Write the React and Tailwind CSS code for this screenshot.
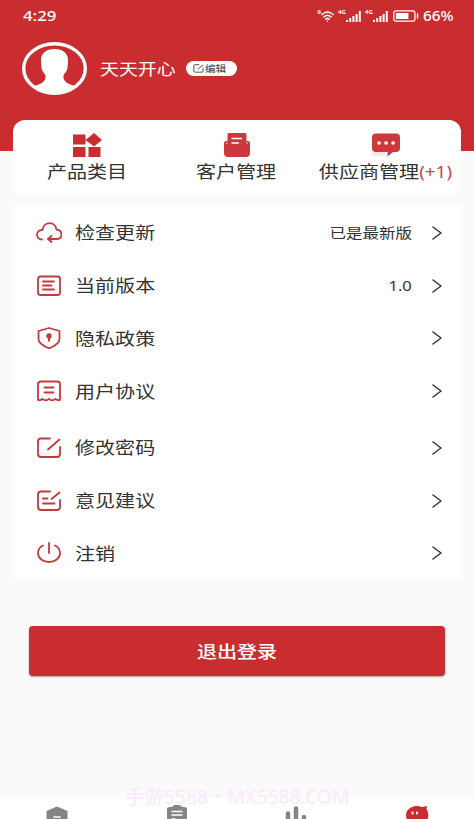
import React from 'react';

const RED = '#c03a3e';

function Svg({ className, viewBox, children }) {
  return (
    <svg className={className} viewBox={viewBox} preserveAspectRatio="none" fill="none" strokeLinecap="round" strokeLinejoin="round">
      {children}
    </svg>
  );
}

const glyphs = {
  cloud: (
    <>
      <path d="M6 17.5C3.5 17.500 1 15.800 1 12.500C1 9.700 3.500 7.800 6.500 8C7 4 10 1.200 13.500 1.200C17.500 1.200 20 4.200 20.500 7.700C24 8 25.500 9.900 25.500 12.600C25.500 15.600 23.500 17 20.500 17H12.500" />
      <path d="M15.500 13.800L12 17L15.500 20" />
    </>
  ),
  version: (
    <>
      <rect x="2" y="1.500" width="22" height="18.500" rx="2.500" />
      <path d="M7 6.500H18M7 10.500H15.500M7 14.500H18" />
    </>
  ),
  shield: (
    <>
      <path d="M13 1L23.500 4V12C23.500 16.500 19 19 13 21.300C7 19 2.500 16.500 2.500 12V4Z" />
      <circle cx="13" cy="9" r="1.800" fill={RED} />
      <path d="M13 10V13.700" strokeWidth="2" />
    </>
  ),
  receipt: (
    <>
      <path d="M2 20V4Q2 1.500 5 1.500H21Q24 1.500 24 4V20Q21.500 20.800 19.500 18.800Q16.200 21.800 13 18.800Q9.800 21.800 6.500 18.800Q4.500 20.800 2 20Z" />
      <path d="M8.500 7.500H17.500M8.500 12.500H17.500" />
    </>
  ),
  edit: (
    <>
      <path d="M14 1.500H5Q2 1.500 2 4.500V17Q2 20 5 20H21Q24 20 24 17V10" />
      <path d="M12 12.500L23.500 2.500" />
    </>
  ),
  feedback: (
    <>
      <path d="M14 1.500H5Q2 1.500 2 4.500V17Q2 20 5 20H21Q24 20 24 17V10" />
      <path d="M15.500 9L23.500 2.500M7 8.500H11.500M7 13.500H18.500" />
    </>
  ),
  power: <path d="M13 1V11M7 3.500C4 5 2 7.800 2 11C2 16.200 7 20 13 20S24 16.200 24 11C24 7.800 22 5 19 3.500" />,
};

const rows = [
  { icon: 'cloud', label: '检查更新', value: '已是最新版' },
  { icon: 'version', label: '当前版本', value: '1.0' },
  { icon: 'shield', label: '隐私政策' },
  { icon: 'receipt', label: '用户协议' },
  { icon: 'edit', label: '修改密码', gap: true },
  { icon: 'feedback', label: '意见建议' },
  { icon: 'power', label: '注销' },
];

function Row({ icon, label, value, gap }) {
  return (
    <li className={`flex h-[52.75px] items-center pl-[23px] pr-[19px] pt-px ${gap ? 'mt-1' : ''}`}>
      <Svg className="h-[22px] w-[26px] shrink-0 stroke-[#c03a3e] stroke-[1.8]" viewBox="0 0 26 22">
        {glyphs[icon]}
      </Svg>
      <span className="ml-[12.500px] mt-px origin-left scale-x-[1.18] whitespace-nowrap text-[17px] leading-6">{label}</span>
      <span className="ml-auto mr-5 mt-px origin-right scale-x-[1.18] whitespace-nowrap text-[14px] leading-5">{value}</span>
      <Svg className="h-3.5 w-2.5 shrink-0 stroke-[#333] stroke-[1.5]" viewBox="0 0 10 14">
        <path d="M1 1L9 7L1 13" />
      </Svg>
    </li>
  );
}

function Signal() {
  return (
    <div className="flex items-start">
      <span className="-mt-px w-2 text-[6px] font-bold leading-[7px]">4G</span>
      <Svg className="mt-px h-[11px] w-[15px] stroke-white stroke-[2]" viewBox="0 0 15 11">
        <path strokeLinecap="butt" d="M1 11V9M4.200 11V7M7.400 11V5M10.600 11V3M13.800 11V0" />
      </Svg>
    </div>
  );
}

function StatusBar() {
  return (
    <div className="flex h-8 items-center pl-[23px] pr-[21px] text-white">
      <span className="origin-left scale-x-[1.2] text-[14px] font-medium leading-5">4:29</span>
      <div className="ml-auto flex items-center">
        <div className="mr-1 flex items-start">
          <span className="-mt-px text-[6px] font-bold leading-[7px]">6</span>
          <Svg className="mt-px h-[11px] w-[13px] stroke-white stroke-[1.5]" viewBox="0 0 14 11">
            <path d="M1 3.500Q7 -1.500 13 3.500M3 6Q7 2.500 11 6M5 8.300Q7 6.500 9 8.300M7 10V10.200" />
          </Svg>
        </div>
        <Signal />
        <div className="w-1" />
        <Signal />
        <Svg className="ml-[5px] h-3 w-[26px]" viewBox="0 0 27 12">
          <rect x="0.800" y="0.800" width="22" height="10.400" rx="2.500" stroke="white" strokeWidth="1.300" />
          <rect x="3" y="3" width="13" height="6" rx="0.500" fill="white" />
          <path d="M25.500 4V8" stroke="white" strokeWidth="1.500" />
        </Svg>
        <span className="ml-1 w-[30px] origin-left scale-x-[1.14] whitespace-nowrap text-[13.500px] font-medium leading-5">66%</span>
      </div>
    </div>
  );
}

function Header() {
  return (
    <header className="h-[151px] bg-[#c92d2f] text-white">
      <StatusBar />
      <div className="flex items-center pl-[22px] pt-[10px]">
        <Svg className="h-[53px] w-[65px]" viewBox="0 0 65 53">
          <ellipse cx="32.500" cy="26.500" rx="30.800" ry="24.800" stroke="white" strokeWidth="3.400" />
          <path fill="white" d="M32.500 7C41 7 46.500 11.500 46 19L45.500 26C45 30 42 31 41.500 34C41 39 45 42 53 44Q43 52 32.500 52T12 44C20 42 24 39 23.500 34C23 31 20 30 19.500 26L19 19C18.500 11.500 24 7 32.500 7Z" />
        </Svg>
        <span className="ml-[13px] w-[76px] origin-left scale-x-[1.18] whitespace-nowrap text-[16px] leading-6">天天开心</span>
        <button className="ml-[10px] flex h-[15px] w-[51px] items-center rounded-full bg-white pl-[7px] text-[#333]">
          <Svg className="h-[9px] w-[11px] stroke-[#333] stroke-[2]" viewBox="0 0 26 22">
            {glyphs.edit}
          </Svg>
          <span className="ml-px origin-left scale-x-[1.18] whitespace-nowrap text-[9px] leading-3">编辑</span>
        </button>
      </div>
    </header>
  );
}

function Shortcut({ label, extra, children }) {
  return (
    <div className="flex flex-1 flex-col items-center pt-3">
      {children}
      <span className="mt-[2.500px] -ml-px scale-x-[1.18] whitespace-nowrap text-[17px] leading-6">
        {label}
        {extra && <span className="text-[16px] text-[#c5474c]">{extra}</span>}
      </span>
    </div>
  );
}

function Shortcuts() {
  return (
    <section className="flex h-[75px] rounded-xl bg-white">
      <Shortcut label="产品类目">
        <Svg className="-ml-px h-[25px] w-[30px] fill-[#c92d2f]" viewBox="0 0 30 25">
          <path d="M1 2.500H13.500V12.500H1ZM1 15H13.500V25H1ZM16.500 15H28.500V25H16.500ZM22 1L30 8L22 14.500L13.500 8Z" />
        </Svg>
      </Shortcut>
      <Shortcut label="客户管理">
        <Svg className="h-[25px] w-[28px]" viewBox="0 0 28 25">
          <path d="M6 1H22Q23.500 1 23.500 2.500V9H25Q27 9 27 11V21Q27 25 23 25H5Q1 25 1 21V11Q1 9 3 9H4.500V2.500Q4.500 1 6 1Z" fill="#cd383d" />
          <path d="M9 6.500H18.500M9 11H15.500" stroke="white" strokeWidth="1.300" />
          <path d="M3.500 11.500L4.500 10.500M24.500 11.500L23.500 10.500" stroke="white" />
        </Svg>
      </Shortcut>
      <Shortcut label="供应商管理" extra="(+1)">
        <Svg className="h-[25px] w-[30px]" viewBox="0 0 30 25">
          <path d="M1 19H15V24H3Q1 24 1 22Z" fill="#fae7e6" />
          <path d="M5 1.500H25Q29 1.500 29 5V16Q29 20 25 20H22L16.500 24.500V20H5Q1 20 1 16V5Q1 1.500 5 1.500Z" fill="#cd383d" />
          <path d="M8 11H8.100M15 11H15.100M22 11H22.100" stroke="white" strokeWidth="3.600" />
        </Svg>
      </Shortcut>
    </section>
  );
}

function TabBar() {
  return (
    <nav className="flex h-[21px] items-start overflow-hidden bg-white pl-[46px] pr-[45px] pt-[8px]">
      <Svg className="h-[14px] w-[22px]" viewBox="0 0 22 14">
        <path d="M0.500 5L11 0.500L21.500 5V14H0.500Z" fill="#858585" />
        <path d="M8 11H14" stroke="white" strokeWidth="1.600" />
      </Svg>
      <Svg className="-mt-px ml-[98px] h-[15px] w-[22px]" viewBox="0 0 22 15">
        <path d="M1 4Q1 2 4 2H6Q7 0 9 0H13Q15 0 16 2H18Q21 2 21 4V15H1Z" fill="#858585" />
        <path d="M6 6.500H16M6 10H16M6 14H9" stroke="white" strokeWidth="1.400" />
      </Svg>
      <Svg className="ml-[97px] h-[14px] w-[22px] stroke-[#858585] stroke-[4.500]" viewBox="0 0 22 14">
        <path d="M3 7.500V18M11 2.500V18M19 11V18" />
      </Svg>
      <Svg className="-mt-px ml-auto h-[15px] w-[24px]" viewBox="0 0 24 15">
        <path d="M2 15Q-1 7 5 3Q10 -0.500 17 2L22 1L21.500 4Q25 10 22 15Z" fill="#c92d2f" />
        <path d="M7.500 7.500V8.500M12 7.500V8.500" stroke="white" strokeWidth="2" />
      </Svg>
    </nav>
  );
}

export default function App() {
  return (
    <div className="relative flex h-[819px] w-[474px] flex-col overflow-hidden bg-[#fafafa] font-['Noto_Sans','Noto_Sans_CJK_SC',sans-serif] text-[#333]">
      <Header />
      <main className="relative -mt-[31px] flex-1 px-[13px]">
        <Shortcuts />
        <ul className="mt-[11px] h-[373px] bg-white">
          {rows.map((row) => (
            <Row key={row.label} {...row} />
          ))}
        </ul>
        <div className="mt-[47px] px-4">
          <button className="flex h-[50px] w-full items-center justify-center rounded-[4px] bg-[#c92d2f] text-white shadow-[0_1px_2px_rgba(120,30,30,0.45)]">
            <span className="mt-px -ml-px scale-x-[1.18] whitespace-nowrap text-[17px] font-medium leading-6">退出登录</span>
          </button>
        </div>
      </main>
      <TabBar />
      <div className="absolute left-[125px] top-[784px] origin-left scale-x-[1.02] whitespace-nowrap text-[19px] leading-[26px] text-[#fae9fa]">手游5588・MX5588.COM</div>
    </div>
  );
}
